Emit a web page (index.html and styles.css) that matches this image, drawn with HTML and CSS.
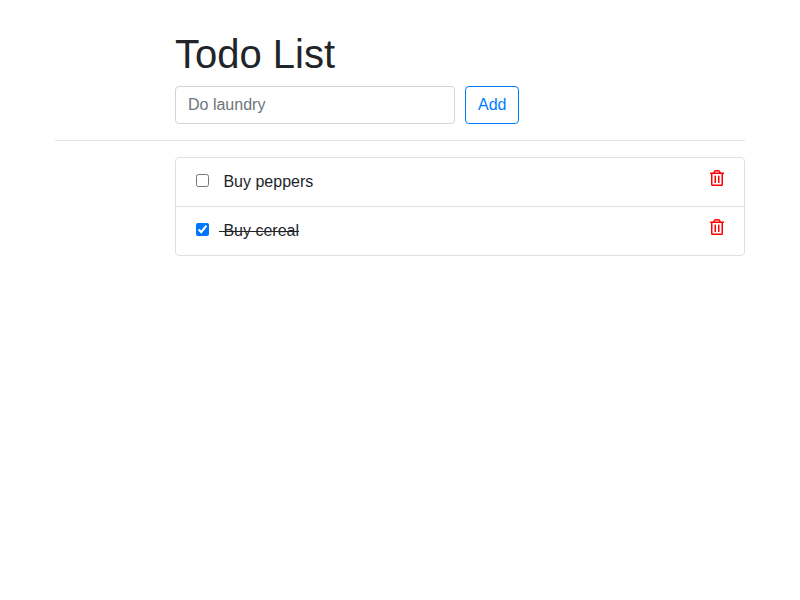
FILE: index.html
```html
<!DOCTYPE html>
<html lang="en">
<head>
<meta charset="utf-8">
<title>Todo List</title>
<link rel="stylesheet" href="styles.css">
</head>
<body>
<div class="container">
  <div class="content">
    <h1>Todo List</h1>
    <form class="add-form">
      <input class="form-control" type="text" placeholder="Do laundry">
      <button class="btn" type="button">Add</button>
    </form>
  </div>
  <hr>
  <div class="content">
    <ul class="list-group">
      <li class="list-item">
        <input type="checkbox" class="check"><label class="label">&nbsp;Buy peppers</label>
        <svg class="trash" viewBox="0 0 448 512"><path d="M268 416h24a12 12 0 0 0 12-12V188a12 12 0 0 0-12-12h-24a12 12 0 0 0-12 12v216a12 12 0 0 0 12 12zM432 80h-82.41l-34-56.7A48 48 0 0 0 274.41 0H173.59a48 48 0 0 0-41.16 23.3L98.41 80H16A16 16 0 0 0 0 96v16a16 16 0 0 0 16 16h16v336a48 48 0 0 0 48 48h288a48 48 0 0 0 48-48V128h16a16 16 0 0 0 16-16V96a16 16 0 0 0-16-16zM171.84 50.91A6 6 0 0 1 177 48h94a6 6 0 0 1 5.15 2.91L293.61 80H154.39zM368 464H80V128h288zm-212-48h24a12 12 0 0 0 12-12V188a12 12 0 0 0-12-12h-24a12 12 0 0 0-12 12v216a12 12 0 0 0 12 12z"/></svg>
      </li>
      <li class="list-item">
        <input type="checkbox" class="check" checked><label class="label done">&nbsp;Buy cereal</label>
        <svg class="trash" viewBox="0 0 448 512"><path d="M268 416h24a12 12 0 0 0 12-12V188a12 12 0 0 0-12-12h-24a12 12 0 0 0-12 12v216a12 12 0 0 0 12 12zM432 80h-82.41l-34-56.7A48 48 0 0 0 274.41 0H173.59a48 48 0 0 0-41.16 23.3L98.41 80H16A16 16 0 0 0 0 96v16a16 16 0 0 0 16 16h16v336a48 48 0 0 0 48 48h288a48 48 0 0 0 48-48V128h16a16 16 0 0 0 16-16V96a16 16 0 0 0-16-16zM171.84 50.91A6 6 0 0 1 177 48h94a6 6 0 0 1 5.15 2.91L293.61 80H154.39zM368 464H80V128h288zm-212-48h24a12 12 0 0 0 12-12V188a12 12 0 0 0-12-12h-24a12 12 0 0 0-12 12v216a12 12 0 0 0 12 12z"/></svg>
      </li>
    </ul>
  </div>
</div>
</body>
</html>
```

FILE: styles.css
```css
*, *::before, *::after { box-sizing: border-box; }
body {
  margin: 0;
  font: 400 16px/1.5 "Liberation Sans", Arial, sans-serif;
  color: #212529;
  background: #fff;
}
.container { width: 690px; margin: 0 auto; padding-top: 30px; }
.content { margin-left: 120px; }
h1 { margin: 0 0 8px; font-size: 40px; font-weight: 500; line-height: 1.2; }
.add-form { display: flex; gap: 10px; margin: 0; }
.form-control {
  width: 280px;
  height: 38px;
  padding: 6px 12px;
  font: inherit;
  color: #495057;
  background: #fff;
  border: 1px solid #ced4da;
  border-radius: 4px;
}
.form-control::placeholder { color: #6c757d; opacity: 1; }
.btn {
  height: 38px;
  padding: 6px 12px;
  font: inherit;
  color: #007bff;
  background: transparent;
  border: 1px solid #007bff;
  border-radius: 4px;
}
hr { margin: 16px 0; border: 0; border-top: 1px solid rgba(0, 0, 0, .1); }
.list-group {
  margin: 0;
  padding: 0;
  list-style: none;
  border: 1px solid rgba(0, 0, 0, .125);
  border-radius: 4px;
}
.list-item { display: flex; align-items: flex-start; height: 48px; padding: 12px 20px; }
.list-item + .list-item { height: 49px; border-top: 1px solid rgba(0, 0, 0, .125); }
.check { width: 13px; height: 13px; margin: 4px 10px 0 0; }
.label { white-space: pre; }
.done { text-decoration: line-through; }
.trash {
  width: 14px;
  height: 16px;
  margin-left: auto;
  fill: #f00;
}
```
